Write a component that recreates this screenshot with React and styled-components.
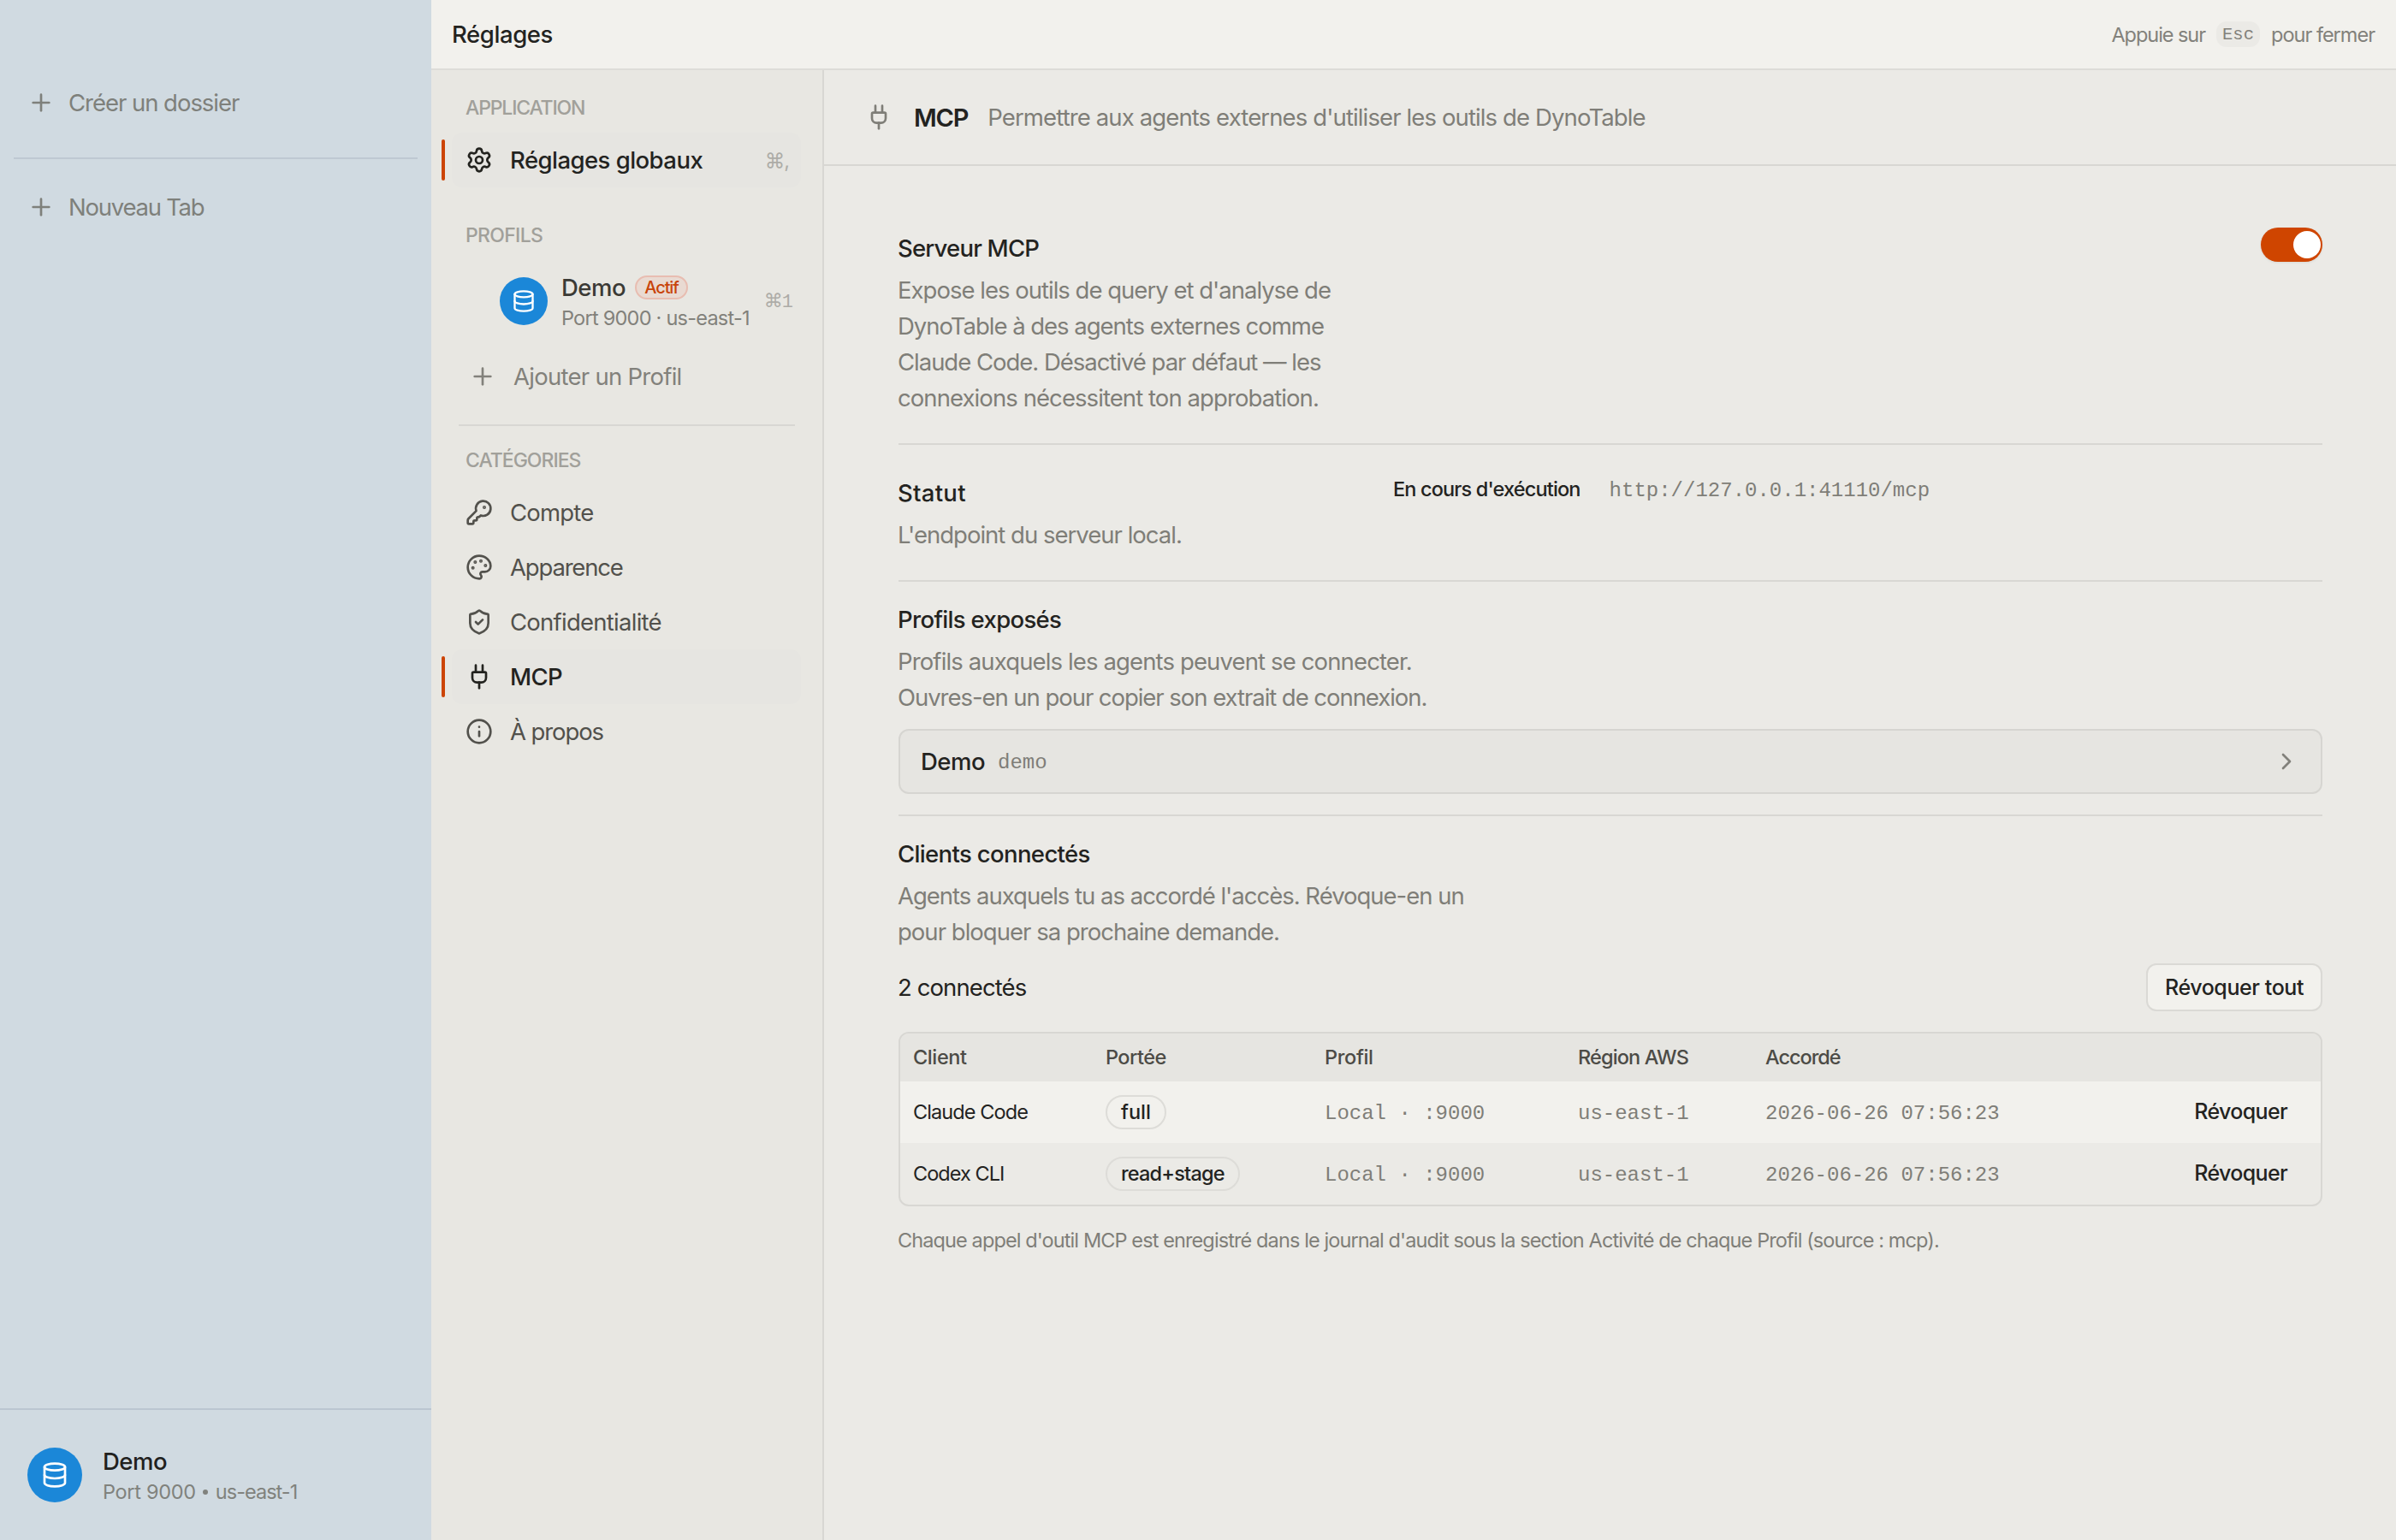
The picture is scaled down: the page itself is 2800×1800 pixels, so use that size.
import React from 'react';
import styled, { createGlobalStyle } from 'styled-components';
import {
  ChevronRight,
  Database,
  Info,
  KeyRound,
  Palette,
  Plug,
  Plus,
  Settings,
  ShieldCheck,
} from 'lucide-react';

const categories = [
  { label: 'Compte', icon: KeyRound, track: -0.8 },
  { label: 'Apparence', icon: Palette, track: -1.18 },
  { label: 'Confidentialité', icon: ShieldCheck, track: -0.74 },
  { label: 'MCP', icon: Plug, track: -0.6, active: true },
  { label: 'À propos', icon: Info, track: -1.1 },
];

const clients = [
  { name: 'Claude Code', nameTrack: -0.9, scope: 'full', scopeTrack: 0 },
  { name: 'Codex CLI', nameTrack: -0.95, scope: 'read+stage', scopeTrack: -0.8 },
];

const App = () => {
  return (
    <>
      <GlobalStyle />
      <Shell>
        <Sidebar>
          <SidebarGroup>
            <SidebarAction>
              <Plus size={32} />
              <Text $track={-1.03}>Créer un dossier</Text>
            </SidebarAction>
          </SidebarGroup>
          <SidebarDivider />
          <SidebarAction>
            <Plus size={32} />
            <Text $track={-1.25}>Nouveau Tab</Text>
          </SidebarAction>
          <SidebarFooter>
            <Avatar $size={64}>
              <Database size={32} />
            </Avatar>
            <FooterText>
              <ProfileName $color="#21211e">Demo</ProfileName>
              <ProfileMeta $color="#80827d">
                <Text $track={-0.3}>Port 9000</Text>
                <Bullet />
                <Text $track={-0.98}>us-east-1</Text>
              </ProfileMeta>
            </FooterText>
          </SidebarFooter>
        </Sidebar>

        <Panel>
          <TopBar>
            <TopTitle>Réglages</TopTitle>
            <CloseHint>
              <Text $track={-1.05}>Appuie sur</Text>
              <Key>Esc</Key>
              <Text $track={-0.99}>pour fermer</Text>
            </CloseHint>
          </TopBar>

          <Body>
            <Nav>
              <NavLabel $track={-1.17}>APPLICATION</NavLabel>
              <NavItem>
                <Marker $active />
                <NavRow $active>
                  <Settings size={32} />
                  <Text $track={-0.54}>Réglages globaux</Text>
                  <Shortcut>⌘,</Shortcut>
                </NavRow>
              </NavItem>

              <NavLabel $track={-0.69} $top={40}>PROFILS</NavLabel>
              <ProfileRow>
                <Avatar $size={56}>
                  <Database size={28} />
                </Avatar>
                <ProfileText>
                  <ProfileName $color="#3b3a35">
                    Demo
                    <ActiveBadge>Actif</ActiveBadge>
                  </ProfileName>
                  <ProfileMeta $color="#82817b">
                    <Text $track={-0.76}>Port 9000 · us-east-1</Text>
                  </ProfileMeta>
                </ProfileText>
                <MonoShortcut>⌘1</MonoShortcut>
              </ProfileRow>
              <AddProfile>
                <Plus size={32} />
                <Text $track={-0.73}>Ajouter un Profil</Text>
              </AddProfile>
              <NavDivider />

              <NavLabel $track={-0.98} $top={24}>CATÉGORIES</NavLabel>
              {categories.map(({ label, icon: Icon, track, active }) => (
                <NavItem key={label}>
                  <Marker $active={active} />
                  <NavRow $active={active}>
                    <Icon size={32} />
                    <Text $track={track}>{label}</Text>
                  </NavRow>
                </NavItem>
              ))}
            </Nav>

            <Main>
              <PageHeader>
                <Plug size={32} />
                <PageTitle>MCP</PageTitle>
                <Text $track={-0.88}>Permettre aux agents externes d'utiliser les outils de DynoTable</Text>
              </PageHeader>

              <Content>
                <SettingRow>
                  <Copy $top={3}>
                    <Title $track={-0.79}>Serveur MCP</Title>
                    <Line $track={-0.99}>Expose les outils de query et d'analyse de</Line>
                    <Line $track={-1.02}>DynoTable à des agents externes comme</Line>
                    <Line $track={-1.02}>Claude Code. Désactivé par défaut — les</Line>
                    <Line $track={-0.92}>connexions nécessitent ton approbation.</Line>
                  </Copy>
                  <Switch role="switch" aria-checked="true">
                    <Thumb />
                  </Switch>
                </SettingRow>

                <SettingRow>
                  <Copy $top={3}>
                    <Title $track={0.28}>Statut</Title>
                    <Line $track={-0.99}>L'endpoint du serveur local.</Line>
                  </Copy>
                  <Status>
                    <StatusText>En cours d'exécution</StatusText>
                    <Mono>http://127.0.0.1:41110/mcp</Mono>
                  </Status>
                </SettingRow>

                <Section>
                  <Copy>
                    <Title $track={-0.66}>Profils exposés</Title>
                    <Line $track={-0.87}>Profils auxquels les agents peuvent se connecter.</Line>
                    <Line $track={-1.05}>Ouvres-en un pour copier son extrait de connexion.</Line>
                  </Copy>
                  <ExposedProfile>
                    <ExposedName>Demo</ExposedName>
                    <ExposedId>demo</ExposedId>
                    <ChevronRight size={32} />
                  </ExposedProfile>
                </Section>

                <Section>
                  <Copy>
                    <Title $track={-0.64}>Clients connectés</Title>
                    <Line $track={-1.01}>Agents auxquels tu as accordé l'accès. Révoque-en un</Line>
                    <Line $track={-0.98}>pour bloquer sa prochaine demande.</Line>
                  </Copy>
                  <ClientsBar>
                    <Text $track={-0.9}>2 connectés</Text>
                    <RevokeAll>Révoquer tout</RevokeAll>
                  </ClientsBar>
                  <Table>
                    <HeadRow>
                      <Text $track={-0.4}>Client</Text>
                      <Text $track={-0.56}>Portée</Text>
                      <Text $track={-0.34}>Profil</Text>
                      <Text $track={-0.86}>Région AWS</Text>
                      <Text $track={-1.03}>Accordé</Text>
                    </HeadRow>
                    {clients.map((client) => (
                      <ClientRow key={client.name}>
                        <Text $track={client.nameTrack}>{client.name}</Text>
                        <Scope $track={client.scopeTrack}>{client.scope}</Scope>
                        <Mono>Local · :9000</Mono>
                        <Mono>us-east-1</Mono>
                        <Mono>2026-06-26 07:56:23</Mono>
                        <Revoke>Révoquer</Revoke>
                      </ClientRow>
                    ))}
                  </Table>
                  <Footnote>
                    Chaque appel d'outil MCP est enregistré dans le journal d'audit sous la section Activité de chaque Profil (source : mcp).
                  </Footnote>
                </Section>
              </Content>
            </Main>
          </Body>
        </Panel>
      </Shell>
    </>
  );
}

const GlobalStyle = createGlobalStyle`
  * {
    box-sizing: border-box;
  }

  body {
    margin: 0;
    font-family: Inter, sans-serif;
    font-size: 27.5px;
    color: #23231f;
  }

  button {
    font: inherit;
    color: inherit;
    margin: 0;
    padding: 0;
    border: 0;
    background: none;
  }

  svg {
    flex: none;
  }
`;

const Text = styled.span`
  letter-spacing: ${(p) => p.$track || 0}px;
  white-space: nowrap;
`;

const Mono = styled.span`
  font-family: 'Liberation Mono', monospace;
  font-size: 24px;
  color: #7f7e78;
  white-space: nowrap;
`;

const Shell = styled.div`
  display: flex;
  width: 2800px;
  height: 1800px;
  overflow: hidden;
`;

const Sidebar = styled.aside`
  display: flex;
  flex-direction: column;
  width: 504px;
  flex: none;
  background: #d0dae1;
  color: #7e807b;
`;

const SidebarGroup = styled.div`
  padding: 88px 0 32px;
`;

const SidebarAction = styled.div`
  display: flex;
  align-items: center;
  gap: 16px;
  height: 64px;
  padding-left: 32px;
`;

const SidebarDivider = styled.div`
  height: 2px;
  margin: 0 16px 24px;
  background: #bec8d2;
`;

const SidebarFooter = styled.div`
  display: flex;
  align-items: center;
  gap: 24px;
  height: 154px;
  margin-top: auto;
  padding-left: 32px;
  border-top: 2px solid #bbc6d1;
`;

const Avatar = styled.div`
  display: flex;
  align-items: center;
  justify-content: center;
  width: ${(p) => p.$size}px;
  height: ${(p) => p.$size}px;
  flex: none;
  border-radius: 50%;
  background: #1b87d8;
  color: #fff;
`;

const FooterText = styled.div`
  padding-top: 3px;
`;

const ProfileName = styled.div`
  display: flex;
  align-items: center;
  height: 35px;
  font-weight: 500;
  letter-spacing: -0.5px;
  color: ${(p) => p.$color};
`;

const ProfileMeta = styled.div`
  display: flex;
  align-items: center;
  height: 35px;
  font-size: 23.5px;
  color: ${(p) => p.$color};
`;

const Bullet = styled.span`
  width: 6px;
  height: 6px;
  margin: 2px 9px 0 8px;
  border-radius: 50%;
  background: currentColor;
`;

const Panel = styled.div`
  display: flex;
  flex-direction: column;
  flex: 1;
  min-width: 0;
`;

const TopBar = styled.header`
  display: flex;
  align-items: center;
  justify-content: space-between;
  height: 82px;
  flex: none;
  padding: 0 25px 0 24px;
  border-bottom: 2px solid #dddcd8;
  background: #f2f1ed;
`;

const TopTitle = styled.div`
  font-weight: 500;
  letter-spacing: -0.4px;
`;

const CloseHint = styled.div`
  display: flex;
  align-items: center;
  gap: 13px;
  font-size: 23.5px;
  color: #82817b;
`;

const Key = styled.kbd`
  width: 51px;
  height: 30px;
  border-radius: 12px;
  background: #ebeae6;
  font-family: 'Liberation Mono', monospace;
  font-size: 20.5px;
  line-height: 32px;
  text-align: center;
`;

const Body = styled.div`
  display: flex;
  flex: 1;
  min-height: 0;
`;

const Nav = styled.nav`
  width: 459px;
  flex: none;
  padding: 28px 0 0 12px;
  border-right: 2px solid #d8d7d3;
  background: #e8e7e2;
`;

const NavLabel = styled.div`
  height: 32px;
  margin: ${(p) => p.$top || 0}px 0 13px 28px;
  font-size: 23px;
  font-weight: 500;
  line-height: 33px;
  letter-spacing: ${(p) => p.$track}px;
  color: #a1a09a;
`;

const NavItem = styled.div`
  display: flex;
  align-items: center;
  gap: 8px;
`;

const Marker = styled.span`
  width: 4px;
  height: 48px;
  border-radius: 2px;
  background: ${(p) => (p.$active ? '#cc4405' : 'transparent')};
`;

const NavRow = styled.div`
  display: flex;
  align-items: center;
  gap: 20px;
  width: 408px;
  height: 64px;
  padding: 0 14px 0 16px;
  border-radius: 12px;
  background: ${(p) => (p.$active ? '#e6e5e1' : 'transparent')};
  font-weight: ${(p) => (p.$active ? 500 : 400)};
  color: ${(p) => (p.$active ? '#23231f' : '#52514c')};
`;

const Shortcut = styled.kbd`
  margin-left: auto;
  font-family: Inter, 'DejaVu Sans', sans-serif;
  font-size: 23.5px;
  font-weight: 400;
  letter-spacing: -1px;
  color: #adaca7;
`;

const MonoShortcut = styled(Shortcut)`
  font-family: 'Liberation Mono', 'DejaVu Sans', monospace;
  font-size: 22px;
`;

const ProfileRow = styled.div`
  display: flex;
  align-items: center;
  gap: 16px;
  height: 88px;
  width: 408px;
  margin-top: 17px;
  margin-left: 12px;
  padding: 0 10px 0 56px;
`;

const ProfileText = styled.div`
  padding-top: 3px;
`;

const ActiveBadge = styled.span`
  width: 62px;
  height: 28px;
  margin-left: 11px;
  border: 2px solid #e8bdb1;
  border-radius: 14px;
  background: #e9dad2;
  font-size: 20px;
  line-height: 24px;
  letter-spacing: -1.1px;
  text-align: center;
  color: #c8440a;
`;

const AddProfile = styled.div`
  display: flex;
  align-items: center;
  gap: 20px;
  height: 64px;
  margin-top: 12px;
  padding-left: 32px;
  color: #82817b;
`;

const NavDivider = styled.div`
  width: 393px;
  height: 2px;
  margin: 24px 0 0 20px;
  background: #d8d7d3;
`;

const Main = styled.main`
  flex: 1;
  min-width: 0;
  background: #ebeae6;
`;

const PageHeader = styled.div`
  display: flex;
  align-items: center;
  height: 112px;
  padding-left: 48px;
  border-bottom: 2px solid #d8d7d3;
  color: #7f7e78;
`;

const PageTitle = styled.h1`
  margin: 0 23px 0 25px;
  font-size: 29px;
  font-weight: 600;
  letter-spacing: -1.2px;
  color: #23231f;
`;

const Content = styled.div`
  padding: 40px 86px 0 87px;
`;

const SettingRow = styled.section`
  display: flex;
  align-items: flex-start;
  padding: 32px 0;
  border-bottom: 2px solid #d8d7d3;
`;

const Section = styled.section`
  padding: 23px 0 24px;

  & + & {
    border-top: 2px solid #d8d7d3;
  }
`;

const Copy = styled.div`
  width: 579px;
  margin-left: -1px;
  padding-top: ${(p) => p.$top || 0}px;
`;

const Title = styled.h2`
  margin: 0 0 7px;
  font-size: 27.5px;
  font-weight: 500;
  line-height: 42px;
  letter-spacing: ${(p) => p.$track}px;
`;

const Line = styled.div`
  line-height: 42px;
  letter-spacing: ${(p) => p.$track}px;
  white-space: nowrap;
  color: #7f7e78;
`;

const Switch = styled.button`
  display: flex;
  justify-content: flex-end;
  width: 72px;
  height: 40px;
  margin-left: auto;
  padding: 4px 2px;
  border-radius: 20px;
  background: #cf4500;
  box-shadow: 0 1px 3px rgba(0, 0, 0, 0.08);
`;

const Thumb = styled.span`
  width: 32px;
  height: 32px;
  border-radius: 50%;
  background: #fff;
`;

const Status = styled.div`
  display: flex;
  align-items: baseline;
  gap: 34px;
  line-height: 40px;
`;

const StatusText = styled.span`
  font-size: 23.5px;
  font-weight: 500;
  letter-spacing: -0.85px;
`;

const ExposedProfile = styled.div`
  display: flex;
  align-items: center;
  height: 76px;
  margin-top: 16px;
  padding: 0 24px 0 24px;
  border: 2px solid #d6d5d1;
  border-radius: 12px;
  background: #e6e5e1;

  svg {
    margin-left: auto;
    color: #82817b;
  }
`;

const ExposedName = styled.span`
  font-weight: 500;
  letter-spacing: -0.5px;
`;

const ExposedId = styled(Mono)`
  margin-left: 15px;
  padding-top: 3px;
`;

const ClientsBar = styled.div`
  display: flex;
  align-items: center;
  justify-content: space-between;
  margin: 16px 0 24px -1px;
`;

const RevokeAll = styled.button`
  width: 206px;
  height: 56px;
  border: 2px solid #dad9d5;
  border-radius: 12px;
  background: #f2f1ed;
  font-size: 25px;
  font-weight: 500;
  letter-spacing: -0.415px;
`;

const Table = styled.div`
  overflow: hidden;
  border: 2px solid #d8d7d3;
  border-radius: 12px;
  font-size: 23.5px;
`;

const Row = styled.div`
  display: grid;
  grid-template-columns: 225px 256px 296px 219px 1fr auto;
`;

const HeadRow = styled(Row)`
  align-items: center;
  height: 56px;
  padding: 0 15px 1px;
  background: #e6e5e1;
  font-weight: 500;
  color: #4c4b46;
`;

const ClientRow = styled(Row)`
  align-items: baseline;
  height: 72px;
  padding: 16px 39px 16px 15px;

  &:nth-child(2) {
    background: #f2f1ed;
  }
`;

const Scope = styled.span`
  justify-self: start;
  height: 40px;
  padding: 0 16px;
  border: 2px solid #dddcd8;
  border-radius: 20px;
  font-weight: 500;
  line-height: 36px;
  letter-spacing: ${(p) => p.$track}px;
`;

const Revoke = styled.button`
  font-size: 25px;
  font-weight: 500;
  letter-spacing: -0.65px;
`;

const Footnote = styled.p`
  margin: 22px 0 0 -1px;
  font-size: 23.5px;
  line-height: 36px;
  letter-spacing: -0.89px;
  white-space: nowrap;
  color: #7f7e78;
`;

export default App;
